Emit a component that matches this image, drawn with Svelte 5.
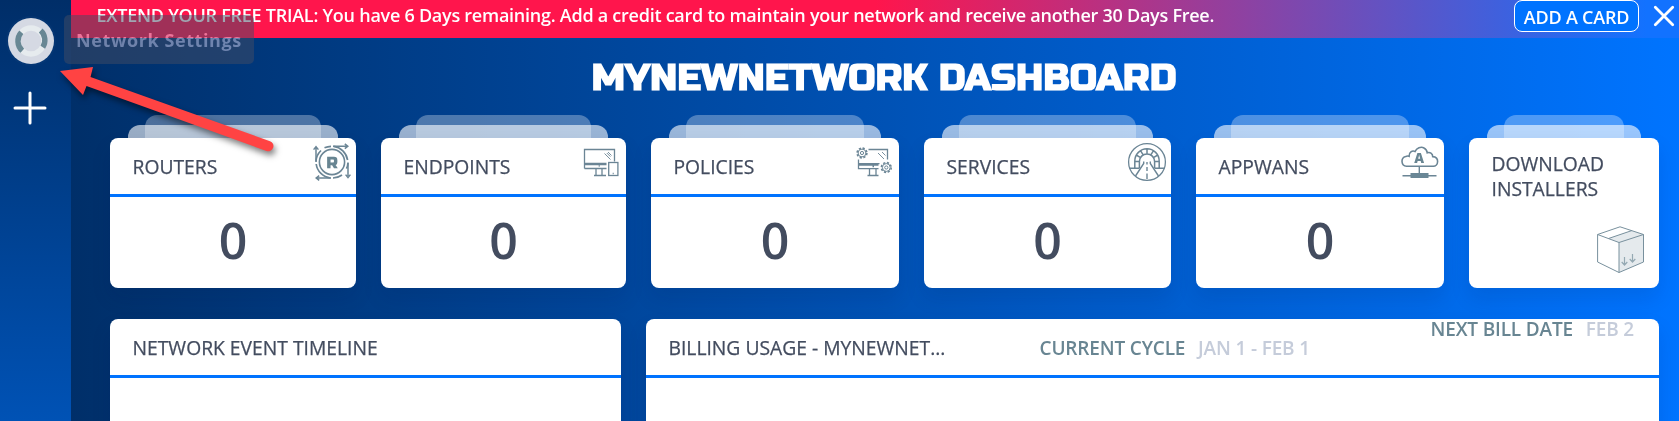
<script>
  const cards = [
    { title: 'ROUTERS', icon: 'router', box: '12 8 44 44', width: 246 },
    { title: 'ENDPOINTS', icon: 'endpoint', box: '12 8 44 44', width: 245 },
    { title: 'POLICIES', icon: 'policy', box: '10 8 44 44', width: 248 },
    { title: 'SERVICES', icon: 'service', box: '12 8 44 44', width: 247 },
    { title: 'APPWANS', icon: 'appwan', box: '10 8 44 44', width: 248 }
  ];
</script>

{#snippet gear(cx, cy)}
  <circle {cx} {cy} r="4.9" stroke-width="1.6" stroke-dasharray="2.2 1.65" />
  <circle {cx} {cy} r="3.9" stroke-width="1" />
  <circle {cx} {cy} r="1.6" stroke-width="1" />
{/snippet}

<div class="page">
  <nav class="sidebar">
    <svg class="network" width="50" height="50" viewBox="0 0 50 50">
      <circle cx="25" cy="25" r="25" fill="#0a3c78" opacity=".45" />
      <circle cx="25" cy="25" r="23" fill="#d5d9e3" />
      <g fill="none" stroke-width="5.4">
        <circle cx="25" cy="25" r="13" stroke="#e6ebee" />
        <path d="M15.3 16.3A13 13 0 0 0 16.3 34.8M34.7 14.6A13 13 0 0 1 36.8 31.2" stroke="#688794" />
      </g>
    </svg>
    <svg class="plus" width="34" height="34" viewBox="0 0 34 34">
      <path d="M17 2v30M2 17h30" stroke="#fff" stroke-width="3" stroke-linecap="round" />
    </svg>
  </nav>

  <main>
    <div class="banner">
      <span class="trial">EXTEND YOUR FREE TRIAL: You have 6 Days remaining. Add a credit card to maintain your network and receive another 30 Days Free.</span>
      <button>ADD A CARD</button>
      <svg class="close" width="22" height="22" viewBox="0 0 22 22">
        <path d="M2.3 2.3 19.7 19.7M19.7 2.3 2.3 19.7" stroke="#fff" stroke-width="2.8" stroke-linecap="round" />
      </svg>
    </div>

    <h1><span>MYNEWNETWORK DASHBOARD</span></h1>

    <section class="cards">
      {#each cards as card}
        <div class="stack" style:width="{card.width}px">
          <i class="back"></i><i class="mid"></i>
          <article>
            <header>
              <h2>{card.title}</h2>
              <svg class="icon" width="44" height="44" viewBox={card.box}>
                {#if card.icon === 'router'}
                  <circle cx="32" cy="32" r="12.6" stroke-width="1.6" />
                  <path d="M24.5 17.8A16.2 16.2 0 0 1 31 16.3M33.5 16.3A16.2 16.2 0 0 1 47.6 30M48 32.5A16.2 16.2 0 0 1 46.5 38.7M42 45A16.2 16.2 0 0 1 33 48M30.5 48A16.2 16.2 0 0 1 16.2 34M16 32A16.2 16.2 0 0 1 21 20.5" stroke-width="1.7" />
                  <path d="M33 16.2h14M44.8 13.8l3 2.4-3 2.4M16 31V17M13.6 19.6l2.4-3 2.4 3M31 48H17M19.2 45.6l-3 2.4 3 2.4M48 33v13M45.6 44.6l2.4 3 2.4-3" stroke-width="1.5" />
                  <text class="r" x="32" y="37.6" text-anchor="middle" font-size="15.5">R</text>
                {:else if card.icon === 'endpoint'}
                  <path d="M14.5 38.5V19.5h30v12M14.5 33.5h22M14.5 38.5h22M14.5 34.5h22M26 38.5v7M32 38.5v7M24 45.5h12M28.7 36h1" />
                  <path d="M34.5 23.5l6 6M38 22l3.5 3.5M36.8 23l3.6 3.6" stroke-width=".9" />
                  <rect x="38.7" y="32.5" width="9.2" height="13" /><path d="M42.7 43.5h1" />
                {:else if card.icon === 'policy'}
                  <path d="M23.5 19.5h19v10M13.5 29.5v9.2h20M13.5 33.7h21M13.5 35h20M24.5 38.7v6.6M31 38.7v6.6M22.5 45.5h11M27.5 36.5h1.5" />
                  <path d="M33 23l6 6M37 22l3.5 3.5" stroke-width=".9" />
                  {@render gear(17, 23)}{@render gear(41.3, 37.5)}
                {:else if card.icon === 'service'}
                  <circle cx="32" cy="32" r="18.4" />
                  <path d="M19.8 38.2V31a12.2 12.2 0 0 1 24.4 0v7.2M24.4 38V31.5a7.6 7.6 0 0 1 15.2 0V38M14.5 38.2h10M39.5 38.2h10M19.8 31.5h4.6M39.6 31.5h4.6M21.2 25l4 2.3M42.8 25l-4 2.3M25.5 20.6l2.5 4M38.5 20.6l-2.5 4M32 18.8v5" stroke-width="1.5" />
                  <path d="M28.7 31.5v2L20.5 46M35.3 31.5v2L43.5 46M32 32v2.5M32 37v4M32 43.5v5.5" stroke-width="1.4" />
                {:else}
                  <path d="M16.5 36.3a5 5 0 0 1-.8-9.8c1.6-.7 2.5-.5 3.4-.2-.4-4 3.2-6.2 6-4.8C26.5 18 31 16.2 34 18c2 1 3 2.6 3.3 4.8 2.5-1 5.5.5 5.4 3.8 3.5.2 5 2.6 4.9 5 0 2.7-2 4.7-4.3 4.7z" stroke-width="1.6" />
                  <path d="M29.3 36.5v7.5M12.5 45.7h34" stroke-width="1.4" />
                  <path d="M20.5 43h18v5h-18z" fill="#6a8796" stroke="none" />
                  <text x="29.2" y="33" text-anchor="middle" font-size="13.5">A</text>
                {/if}
              </svg>
            </header>
            <p class="count">0</p>
          </article>
        </div>
      {/each}
      <div class="stack installers">
        <i class="back"></i><i class="mid"></i>
        <article>
          <h2>DOWNLOAD<br />INSTALLERS</h2>
          <svg class="package" width="48" height="48" viewBox="0 0 48 48">
            <path d="M11.5 12.5 35 4.5 46.5 8.5V36L22 46.5V16.5z" fill="#e5eaed" />
            <path d="M23 .8.6 8.5V36L22 46.5 46.5 36V8.5zM.6 8.5 22 16.5 46.5 8.5M22 16.5v30M11.5 12.5l23.5-8" fill="none" stroke="#78909d" stroke-width="1" />
            <path d="M27.5 31v8m-2.8-3 2.8 3 2.8-3M35.5 28v8m-2.8-3 2.8 3 2.8-3" fill="none" stroke="#95a9b3" stroke-width="1.2" />
          </svg>
        </article>
      </div>
    </section>

    <section class="panels">
      <article class="timeline">
        <header><h2>NETWORK EVENT TIMELINE</h2></header>
      </article>
      <article class="billing">
        <header>
          <h2>BILLING USAGE - MYNEWNET...</h2>
          <p class="cycle">CURRENT CYCLE <b>JAN 1 - FEB 1</b></p>
          <p class="next">NEXT BILL DATE <b>FEB 2</b></p>
        </header>
      </article>
    </section>
  </main>

  <div class="tooltip"></div>
  <span class="tip-label">Network Settings</span>
  <svg class="arrow" width="240" height="110" viewBox="50 55 240 110">
    <path d="M60 71 93 67 90.5 77 270 141.2A5 5 0 0 1 266.5 151L86.5 86 83 95z" fill="#ff4343" />
  </svg>
</div>

<style>
  :global(body) { margin: 0; overflow: hidden; }
  .page {
    position: relative;
    display: flex;
    width: 1679px;
    height: 421px;
    overflow: hidden;
    font-family: "Open Sans", "Noto Sans", sans-serif;
    color: #434c5f;
  }
  h1, h2, p { margin: 0; font-weight: 400; }
  .sidebar {
    flex: 0 0 71px;
    box-sizing: border-box;
    display: flex;
    flex-direction: column;
    padding: 16px 0 0 6px;
    gap: 25px;
    background: linear-gradient(#002e68, #0052b5);
  }
  .plus { margin-left: 7.3px; }
  main {
    flex: 1;
    min-width: 0;
    background: linear-gradient(to right, #002f69, #0074ff);
  }
  .banner {
    display: flex;
    align-items: flex-start;
    height: 38px;
    box-sizing: border-box;
    padding: 0 4px 0 25.5px;
    background: linear-gradient(to right, #ff154c 50%, #1272ff 98%);
    color: #fff;
  }
  .trial { flex: 1; font-size: 18px; font-weight: 600; line-height: 31px; white-space: nowrap; letter-spacing: -.255px; }
  button {
    width: 125px;
    height: 32px;
    box-sizing: border-box;
    padding: 2px 0 0;
    border: 1px solid #fff;
    border-radius: 8px;
    background: #0073ff;
    color: #fff;
    font: 600 18px "Open Sans", sans-serif;
    letter-spacing: -.2px;
    white-space: nowrap;
  }
  .close { margin: 4.5px 0 0 14px; }
  h1 {
    display: flex;
    justify-content: center;
    height: 100px;
    padding-left: 18px;
    color: #fff;
    font: 900 37.35px/79px "Russo One", Inter, sans-serif;
    white-space: nowrap;
  }
  .cards { display: flex; gap: 25px; padding-left: 39px; }
  .stack { position: relative; height: 150px; }
  .installers { width: 190px; }
  .back, .mid { position: absolute; border-radius: 12px 12px 0 0; }
  .back { inset: -23px 35px auto; height: 23px; background: rgba(255, 255, 255, .3); }
  .mid { inset: -13px 18px auto; height: 13px; background: rgba(255, 255, 255, .6); }
  article {
    position: relative;
    height: 100%;
    background: #fff;
    border-radius: 8px;
    box-shadow: 0 10px 20px rgba(0, 20, 70, .1);
  }
  header {
    display: flex;
    justify-content: space-between;
    height: 56px;
    padding-left: 22.5px;
    border-bottom: 3px solid #0073ff;
  }
  h2 { font-size: 19.3px; line-height: 58px; -webkit-text-stroke: .25px #434c5f; white-space: nowrap; }
  .icon { fill: none; stroke: #6b8595; stroke-width: 1.3; }
  .icon text { fill: #688592; stroke: none; font-family: "Open Sans", sans-serif; font-weight: 800; }
  .icon .r { font-family: "Russo One", sans-serif; }
  .count { text-align: center; font-size: 50px; font-weight: 600; line-height: 87px; }
  .installers article { display: flex; flex-direction: column; justify-content: space-between; box-sizing: border-box; padding: 13px 14px 14px 22.5px; }
  .installers h2 { line-height: 25px; }
  .package { align-self: flex-end; }
  .panels { display: flex; gap: 25px; padding: 31px 0 0 39px; }
  .panels article { height: 120px; }
  .timeline { width: 511px; }
  .billing { width: 1013px; }
  .billing h2 { width: 371px; }
  .billing header { justify-content: flex-start; padding-right: 25px; }
  .billing p { font-size: 19px; font-weight: 600; color: #688592; line-height: 58px; letter-spacing: -.16px; white-space: nowrap; }
  .billing b { margin-left: 8px; font-weight: 600; color: #c5ccda; }
  .billing .next { margin-left: auto; line-height: 20px; }
  .tooltip {
    position: absolute;
    left: 64px;
    top: 15px;
    width: 190px;
    height: 49px;
    border-radius: 5px;
    background: rgba(65, 76, 100, .5);
  }
  .tip-label {
    position: absolute;
    left: 76px;
    top: 28px;
    font-size: 18px;
    font-weight: 700;
    letter-spacing: .6px;
    line-height: 25px;
    white-space: nowrap;
    color: rgb(78, 68, 66);
    mix-blend-mode: plus-lighter;
  }
  .arrow { position: absolute; left: 50px; top: 55px; filter: drop-shadow(2px 4px 3px rgba(0, 0, 0, .5)); }
</style>
